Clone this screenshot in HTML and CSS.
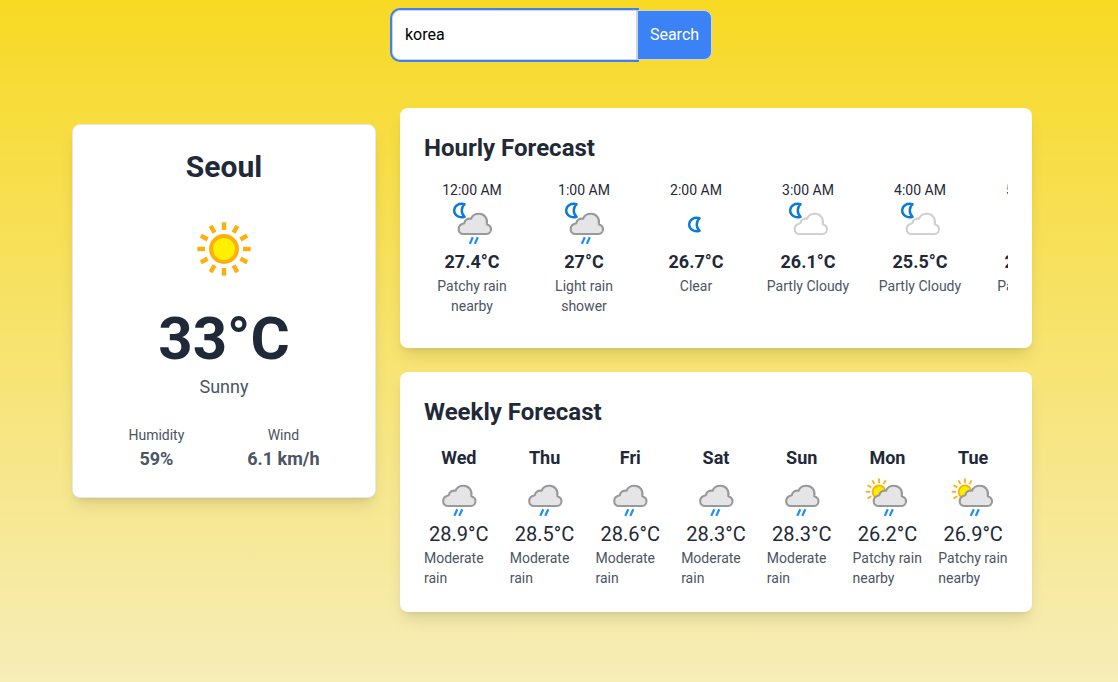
FILE: index.html
```html
<!DOCTYPE html>
<html lang="en">
<head>
<meta charset="utf-8">
<meta name="viewport" content="width=device-width, initial-scale=1">
<title>Weather</title>
<link rel="stylesheet" href="styles.css">
</head>
<body>
<svg class="sprite" aria-hidden="true">
  <defs>
    <path id="cloud" d="M15.5 34H38.5A4.7 4.7 0 0 0 43 29.2C43 26.6 41.5 25 38.8 24.2C40 18 36 13.7 31 13.7C27 13.7 24 16 23 18.8C20 18 17 19.5 16.3 23.2C13 23.8 10.7 26 10.7 29.2C10.7 32 12.8 34 15.5 34Z" stroke-width="2.1" stroke-linejoin="round"/>
    <path id="drops" d="M24.8 37.2L21.8 43.9M29.8 37.2L26.8 43.9" fill="none" stroke="#2490ee" stroke-width="2.3"/>
    <path id="moon" d="M16.6 4.2C11 2.6 6.2 5.6 6.2 10.5C6.2 15.4 11 18.4 16.6 16.8C12.8 13.4 12.8 7.6 16.6 4.2Z" fill="#fff" stroke="#0a7ad8" stroke-width="2.4" stroke-linejoin="round"/>
    <path id="ray" d="M0-13.2V-8.9" stroke="#ffae0c" stroke-width="1.8"/>
    <path id="bigray" d="M0-26.7V-19" stroke="#ffae0c" stroke-width="4.4"/>
  </defs>
  <symbol id="rain-night" viewBox="0 0 48 48">
    <use href="#moon"/><use href="#cloud" fill="#e5e5e7" stroke="#999"/><use href="#drops"/>
  </symbol>
  <symbol id="cloudy-night" viewBox="0 0 48 48">
    <use href="#moon"/><use href="#cloud" fill="#fff" stroke="#d0d0d0"/>
  </symbol>
  <symbol id="clear-night" viewBox="0 0 48 48">
    <use href="#moon" transform="translate(11 14)"/>
  </symbol>
  <symbol id="rain" viewBox="0 0 48 48">
    <g transform="translate(-2.5 0)"><use href="#cloud" fill="#e5e5e7" stroke="#999"/><use href="#drops"/></g>
  </symbol>
  <symbol id="rain-day" viewBox="0 0 48 48">
    <g transform="translate(16 19.8)">
      <circle r="6.4" fill="#ffec00" stroke="#ffae0c" stroke-width="1.8"/>
      <use href="#ray"/><use href="#ray" transform="rotate(30)"/><use href="#ray" transform="rotate(-30)"/><use href="#ray" transform="rotate(-60)"/><use href="#ray" transform="rotate(-90)"/><use href="#ray" transform="rotate(-120)"/>
    </g>
    <use href="#cloud" fill="#e5e5e7" stroke="#999"/><use href="#drops"/>
  </symbol>
  <symbol id="sunny" viewBox="0 0 96 96">
    <g transform="translate(48 48)">
      <circle r="13" fill="#fff000" stroke="#ffae0c" stroke-width="4"/>
      <use href="#bigray"/><use href="#bigray" transform="rotate(30)"/><use href="#bigray" transform="rotate(60)"/><use href="#bigray" transform="rotate(90)"/><use href="#bigray" transform="rotate(120)"/><use href="#bigray" transform="rotate(150)"/><use href="#bigray" transform="rotate(180)"/><use href="#bigray" transform="rotate(210)"/><use href="#bigray" transform="rotate(240)"/><use href="#bigray" transform="rotate(270)"/><use href="#bigray" transform="rotate(300)"/><use href="#bigray" transform="rotate(330)"/>
    </g>
  </symbol>
</svg>
<div class="page">
  <form class="search" role="search">
    <input class="search-input" type="text" name="city" value="korea" aria-label="City">
    <button class="search-button" type="button">Search</button>
  </form>
  <main class="dashboard">
    <section class="card current">
      <h1 class="city">Seoul</h1>
      <svg class="icon-large" role="img" aria-label="Sunny"><use href="#sunny"/></svg>
      <p class="current-temp">33°C</p>
      <p class="condition">Sunny</p>
      <div class="stats">
        <div><p class="stat-label">Humidity</p><p class="stat-value">59%</p></div>
        <div><p class="stat-label">Wind</p><p class="stat-value">6.1 km/h</p></div>
      </div>
    </section>
    <div class="forecasts">
      <section class="card">
        <h2 class="title">Hourly Forecast</h2>
        <div class="hours">
          <div class="hour"><p class="time">12:00 AM</p><svg class="icon" aria-hidden="true"><use href="#rain-night"/></svg><p class="hour-temp">27.4°C</p><p class="desc">Patchy rain nearby</p></div>
          <div class="hour"><p class="time">1:00 AM</p><svg class="icon" aria-hidden="true"><use href="#rain-night"/></svg><p class="hour-temp">27°C</p><p class="desc">Light rain shower</p></div>
          <div class="hour"><p class="time">2:00 AM</p><svg class="icon" aria-hidden="true"><use href="#clear-night"/></svg><p class="hour-temp">26.7°C</p><p class="desc">Clear</p></div>
          <div class="hour"><p class="time">3:00 AM</p><svg class="icon" aria-hidden="true"><use href="#cloudy-night"/></svg><p class="hour-temp">26.1°C</p><p class="desc">Partly Cloudy</p></div>
          <div class="hour"><p class="time">4:00 AM</p><svg class="icon" aria-hidden="true"><use href="#cloudy-night"/></svg><p class="hour-temp">25.5°C</p><p class="desc">Partly Cloudy</p></div>
          <div class="hour"><p class="time">5:00 AM</p><svg class="icon" aria-hidden="true"><use href="#rain-night"/></svg><p class="hour-temp">25.3°C</p><p class="desc">Patchy rain</p></div>
        </div>
      </section>
      <section class="card">
        <h2 class="title">Weekly Forecast</h2>
        <div class="days">
          <div class="day"><h3 class="day-name">Wed</h3><svg class="icon" aria-hidden="true"><use href="#rain"/></svg><p class="day-temp">28.9°C</p><p class="desc">Moderate rain</p></div>
          <div class="day"><h3 class="day-name">Thu</h3><svg class="icon" aria-hidden="true"><use href="#rain"/></svg><p class="day-temp">28.5°C</p><p class="desc">Moderate rain</p></div>
          <div class="day"><h3 class="day-name">Fri</h3><svg class="icon" aria-hidden="true"><use href="#rain"/></svg><p class="day-temp">28.6°C</p><p class="desc">Moderate rain</p></div>
          <div class="day"><h3 class="day-name">Sat</h3><svg class="icon" aria-hidden="true"><use href="#rain"/></svg><p class="day-temp">28.3°C</p><p class="desc">Moderate rain</p></div>
          <div class="day"><h3 class="day-name">Sun</h3><svg class="icon" aria-hidden="true"><use href="#rain"/></svg><p class="day-temp">28.3°C</p><p class="desc">Moderate rain</p></div>
          <div class="day"><h3 class="day-name">Mon</h3><svg class="icon" aria-hidden="true"><use href="#rain-day"/></svg><p class="day-temp">26.2°C</p><p class="desc">Patchy rain nearby</p></div>
          <div class="day"><h3 class="day-name">Tue</h3><svg class="icon" aria-hidden="true"><use href="#rain-day"/></svg><p class="day-temp">26.9°C</p><p class="desc">Patchy rain nearby</p></div>
        </div>
      </section>
    </div>
  </main>
</div>
</body>
</html>
```
FILE: styles.css
```css
*, *::before, *::after { box-sizing: border-box; }

body {
  margin: 0;
  font-family: Roboto, "Liberation Sans", sans-serif;
  font-size: 16px;
  line-height: 24px;
  color: #1f2937;
}

h1, h2, h3, p { margin: 0; }

.sprite { position: absolute; width: 0; height: 0; }

.page {
  min-height: 100vh;
  padding: 10px 14px 48px 0;
  background: linear-gradient(to bottom, #f8d924, #f6edb8);
}

.search {
  display: flex;
  justify-content: center;
  margin-bottom: 48px;
}

.search-input {
  width: 245px;
  padding: 12px;
  border: 1px solid #d1d5db;
  border-radius: 8px 0 0 8px;
  outline: none;
  background: #fff;
  box-shadow: 0 0 0 2px #3b82f6;
  color: #000;
  font: inherit;
}

.search-button {
  padding: 12px;
  border: 1px solid #d1d5db;
  border-radius: 0 8px 8px 0;
  background: #3b82f6;
  color: #fff;
  font: inherit;
  cursor: pointer;
}

.dashboard {
  display: grid;
  grid-template-columns: repeat(3, minmax(0, 1fr));
  gap: 24px;
  align-items: start;
  max-width: 992px;
  margin: 0 auto;
  padding: 0 16px;
}

.card {
  min-width: 0;
  padding: 24px;
  border-radius: 8px;
  background: #fff;
  box-shadow: 0 10px 15px -3px rgb(0 0 0 / 0.1), 0 4px 6px -4px rgb(0 0 0 / 0.1);
}

.current {
  display: flex;
  flex-direction: column;
  align-items: center;
  margin-top: 16px;
  border: 1px solid #e5e7eb;
}

.city { font-size: 30px; line-height: 36px; }
.icon-large { width: 96px; height: 96px; margin: 16px 0 12px; }
.current-temp { margin-bottom: 4px; font-size: 60px; font-weight: 700; line-height: 60px; }
.condition { font-size: 18px; line-height: 28px; color: #4b5563; }

.stats {
  display: flex;
  align-self: stretch;
  justify-content: space-around;
  margin-top: 24px;
  text-align: center;
  color: #4b5563;
}

.stat-label { font-size: 14px; line-height: 20px; }
.stat-value { font-size: 18px; font-weight: 700; line-height: 28px; }

.forecasts {
  display: grid;
  grid-column: span 2;
  gap: 24px;
}

.title { margin-bottom: 16px; font-size: 24px; line-height: 32px; }
.icon { display: block; width: 48px; height: 48px; }
.desc { font-size: 14px; line-height: 20px; color: #4b5563; }

.hours {
  display: flex;
  gap: 16px;
  padding-bottom: 8px;
  overflow-x: auto;
  scrollbar-width: none;
}

.hour {
  display: flex;
  flex: 0 0 96px;
  flex-direction: column;
  align-items: center;
  text-align: center;
}

.time { font-size: 14px; line-height: 20px; }
.hour-temp { font-size: 18px; font-weight: 700; line-height: 28px; }

.days {
  display: grid;
  grid-template-columns: repeat(7, minmax(0, 1fr));
  gap: 16px;
}

.day {
  display: flex;
  flex-direction: column;
  align-items: center;
}

.day-name { font-size: 18px; line-height: 28px; }
.day-temp { font-size: 20px; line-height: 28px; }
```
